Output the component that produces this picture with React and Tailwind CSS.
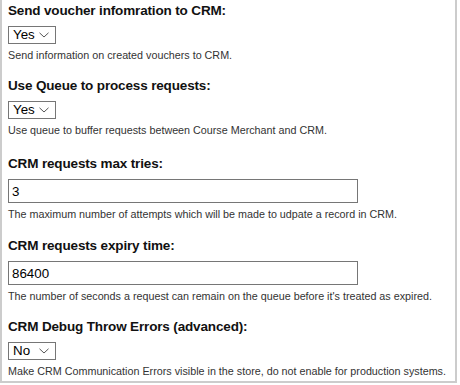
import React from "react";

const FONT = { fontFamily: '"Liberation Sans", Arial, sans-serif' };

function Chevron() {
  return (
    <svg width="10" height="6" viewBox="0 0 10 6" className="shrink-0">
      <path d="M0.5 0.8 L5 5 L9.5 0.8" fill="none" stroke="#555" strokeWidth="1" />
    </svg>
  );
}

function SelectBox({ value }) {
  return (
    <div
      role="combobox"
      className="flex items-center justify-between w-[48px] h-[18px] border border-[#767676] bg-white pl-[4px] pr-[6px] text-[13.33px] leading-[16px] text-black"
    >
      <span>{value}</span>
      <Chevron />
    </div>
  );
}

function TextBox({ value }) {
  return (
    <input
      defaultValue={value}
      className="block w-[350px] h-[24px] border border-[#767676] bg-white px-[3px] text-[13.33px] text-black outline-none"
    />
  );
}

function Field({ label, help, children }) {
  return (
    <div className="flex flex-col">
      <h3 className="text-[13.5px] leading-[16px] font-bold tracking-[-0.15px] text-[#111] mb-[7px] whitespace-nowrap">
        {label}
      </h3>
      {children}
      <p className="text-[10.75px] leading-[13px] text-[#333] mt-[5px] whitespace-nowrap">{help}</p>
    </div>
  );
}

export default function App() {
  return (
    <div className="w-[460px] h-[385px] bg-white" style={FONT}>
      <div className="w-[457px] h-[383px] border-l-2 border-r-2 border-b-2 border-[#cccccc] pl-[6px] pt-[3px] flex flex-col">
        <Field label="Send voucher infomration to CRM:" help="Send information on created vouchers to CRM.">
          <SelectBox value="Yes" />
        </Field>

        <div className="h-[16px]" />
        <Field
          label="Use Queue to process requests:"
          help="Use queue to buffer requests between Course Merchant and CRM."
        >
          <SelectBox value="Yes" />
        </Field>

        <div className="h-[19px]" />
        <Field
          label="CRM requests max tries:"
          help="The maximum number of attempts which will be made to udpate a record in CRM."
        >
          <TextBox value="3" />
        </Field>

        <div className="h-[17px]" />
        <Field
          label="CRM requests expiry time:"
          help="The number of seconds a request can remain on the queue before it's treated as expired."
        >
          <TextBox value="86400" />
        </Field>

        <div className="h-[16px]" />
        <Field
          label="CRM Debug Throw Errors (advanced):"
          help="Make CRM Communication Errors visible in the store, do not enable for production systems."
        >
          <SelectBox value="No" />
        </Field>
      </div>
    </div>
  );
}
